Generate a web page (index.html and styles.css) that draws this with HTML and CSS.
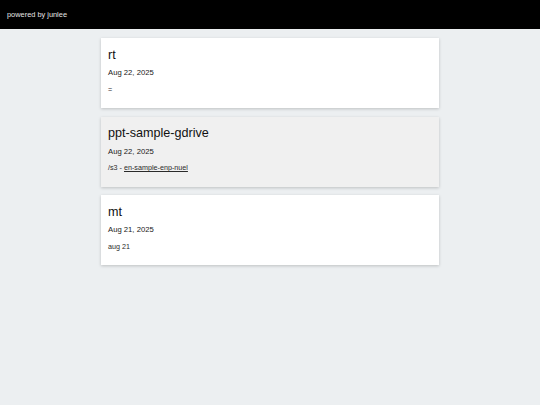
FILE: index.html
```html
<!DOCTYPE html>
<html lang="en">
<head>
<meta charset="utf-8">
<title>junlee</title>
<link rel="stylesheet" href="styles.css">
</head>
<body>
<header class="topbar"><span class="brand">powered by junlee</span></header>
<main class="list">
  <article class="card">
    <h2 class="title">rt</h2>
    <div class="date">Aug 22, 2025</div>
    <p class="snippet">=</p>
  </article>
  <article class="card card-hover">
    <h2 class="title">ppt-sample-gdrive</h2>
    <div class="date">Aug 22, 2025</div>
    <p class="snippet">/s3 - <a class="link" href="#">en-sample-enp-nuel</a></p>
  </article>
  <article class="card">
    <h2 class="title">mt</h2>
    <div class="date">Aug 21, 2025</div>
    <p class="snippet">aug 21</p>
  </article>
</main>
</body>
</html>
```
FILE: styles.css
```css
html, body {
  margin: 0;
  padding: 0;
}
body {
  background: #eceff1;
  font-family: "Liberation Sans", Arial, sans-serif;
  color: #111;
  min-height: 405px;
}
.topbar {
  height: 29px;
  background: #000;
  display: flex;
  align-items: center;
  padding-left: 7px;
}
.brand {
  color: #e6e6e6;
  font-size: 7.4px;
  line-height: 10px;
}
.list {
  width: 338px;
  margin: 9px auto 0;
  display: flex;
  flex-direction: column;
  gap: 8.5px;
}
.card {
  box-sizing: border-box;
  height: 70px;
  background: #fff;
  padding: 9.5px 7px 0;
  box-shadow: 0 1px 3px rgba(0, 0, 0, 0.2);
}
.card-hover {
  background: #f0f0f0;
}
.title {
  margin: 0;
  font-size: 12.6px;
  line-height: 15px;
  font-weight: normal;
  color: #111;
}
.date {
  margin-top: 5.5px;
  font-size: 7.7px;
  line-height: 10px;
  color: #1a1a1a;
}
.snippet {
  margin: 6.5px 0 0;
  font-size: 7.2px;
  line-height: 10px;
  color: #2a2a2a;
}
.link {
  color: #2a2a2a;
  text-decoration: underline;
}
```
